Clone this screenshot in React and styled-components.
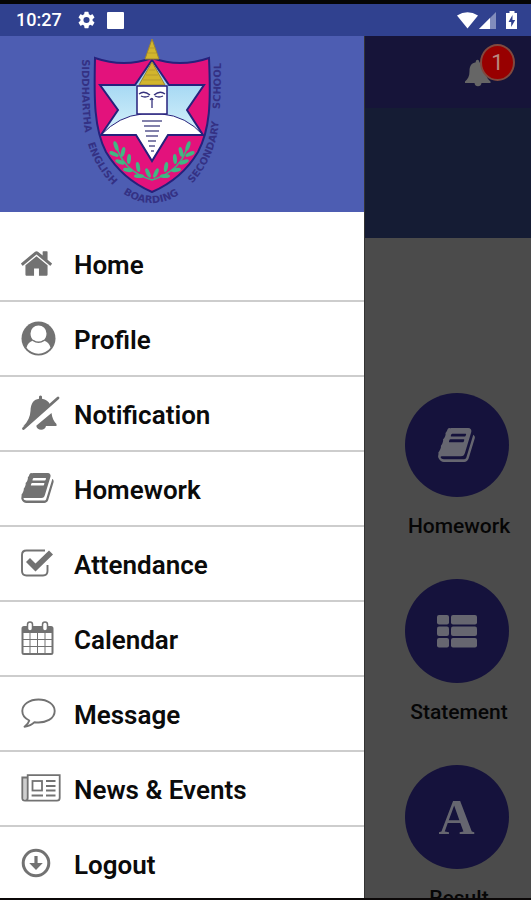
import React from "react";
import styled, { createGlobalStyle } from "styled-components";

const GlobalStyle = createGlobalStyle`
  *, *::before, *::after { box-sizing: border-box; }
  body { margin: 0; background: #000; }
  svg { display: block; flex: none; }
`;

const Screen = styled.div`
  display: flex;
  flex-direction: column;
  height: 100vh;
  overflow: hidden;
  border-top: 4px solid #050505;
  border-bottom: 2px solid #0b0808;
  font-family: Roboto, "Liberation Sans", sans-serif;
  color: #0b0b0b;
`;

const StatusBar = styled.header`
  display: flex;
  flex: none;
  align-items: center;
  justify-content: space-between;
  height: 32px;
  padding: 0 12px 0 16px;
  background: #30418f;
  color: #fff;
`;

const StatusGroup = styled.div`
  display: flex;
  align-items: center;
  gap: ${(p) => p.$gap}px;
`;

const Clock = styled.time`
  font-size: 18px;
  line-height: 24px;
  font-weight: 500;
`;

const Body = styled.div`
  display: flex;
  flex: 1;
  min-height: 0;
`;

const Drawer = styled.aside`
  display: flex;
  flex-direction: column;
  width: calc(100% - 167px);
  background: #fff;
  overflow: hidden;
`;

const DrawerHeader = styled.div`
  display: flex;
  flex: none;
  justify-content: center;
  height: 176px;
  padding-right: 60px;
  background: #4d5db2;
`;

const Menu = styled.nav`
  display: flex;
  flex-direction: column;
  padding-top: 15px;
`;

const MenuItem = styled.a`
  display: flex;
  flex: none;
  align-items: center;
  height: 75px;
  padding: 3px 0 0 21px;
  border-bottom: 2px solid #cdcdcd;
  color: inherit;
  text-decoration: none;
  font-size: 26px;
  line-height: 32px;
  font-weight: 600;
`;

const IconSlot = styled.span`
  flex: none;
  width: 53px;
  margin-bottom: 4px;
  color: #727272;
`;

const Dashboard = styled.main`
  display: flex;
  flex: 1;
  flex-direction: column;
  min-width: 0;
  overflow: hidden;
  background: #4b4b4b;
  border-left: 1px solid #333;
`;

const AppBar = styled.div`
  display: flex;
  flex: none;
  justify-content: flex-end;
  height: 72px;
  padding: 8px 16px 0 0;
  background: #161439;
`;

const BellButton = styled.button`
  position: relative;
  width: 50px;
  height: 44px;
  padding: 14px 0 0;
  border: 0;
  background: none;
  color: #666;
`;

const Badge = styled.span`
  position: absolute;
  top: 0;
  right: 0;
  width: 35px;
  height: 37px;
  border: 2px solid #80493f;
  border-radius: 50%;
  background: #980000;
  color: #b98a80;
  font: 22px/33px Roboto, sans-serif;
  text-align: center;
`;

const Banner = styled.div`
  flex: none;
  height: 130px;
  background: #151c34;
`;

const Tiles = styled.div`
  display: flex;
  flex-direction: column;
  align-items: flex-end;
  gap: 41px;
  padding: 155px 14px 0 0;
`;

const Tile = styled.a`
  display: flex;
  flex-direction: column;
  align-items: center;
  gap: 17px;
  width: 116px;
  color: #060606;
  text-decoration: none;
  font-size: 21px;
  line-height: 24px;
  font-weight: 500;
`;

const TileCircle = styled.span`
  display: flex;
  align-items: center;
  justify-content: center;
  width: 104px;
  height: 104px;
  margin-right: 5px;
  border-radius: 50%;
  background: #15123c;
  color: #666670;
`;

const Letter = styled.span`
  font: bold 50px/60px "Liberation Serif", serif;
`;

const bookPath =
  "M1703 478q40 57 18 129l-275 906q-19 64-76.5 107.5t-122.5 43.5h-923q-77 0-148.5-53.5t-99.5-131.5q-24-67-2-127 0-4 3-27t4-37q1-8-3-21.5t-3-19.5q2-11 8-21t16.5-23.5 16.5-23.5q23-38 45-91.5t30-91.5q3-10 .5-30t-.5-28q3-11 17-28t17-23q21-36 42-92t25-90q1-9-2.5-32t.5-28q4-13 22-30.5t22-22.5q19-26 42.5-84.5t27.5-96.5q1-8-3-25.5t-2-26.5q2-8 9-18t18-23 17-21q8-12 16.5-30.5t15-35 16-36 19.5-32 26.5-23.5 36-11.5 47.5 5.5l-1 3q38-9 51-9h761q74 0 114 56t18 130l-274 906q-36 119-71.5 153.5t-128.5 34.5h-869q-27 0-38 15-11 16-1 43 24 70 144 70h923q29 0 56-15.5t35-41.5l300-987q7-22 5-57 38 15 59 43zm-1064 2q-4 13 2 22.5t20 9.5h608q13 0 25.5-9.5t16.5-22.5l21-64q4-13-2-22.5t-20-9.5h-608q-13 0-25.5 9.5t-16.5 22.5zm-83 256q-4 13 2 22.5t20 9.5h608q13 0 25.5-9.5t16.5-22.5l21-64q4-13-2-22.5t-20-9.5h-608q-13 0-25.5 9.5t-16.5 22.5z";

const Glyph = ({ w, h, box, children }) => (
  <svg width={w} height={h} viewBox={box || `0 0 ${w} ${h}`} fill="currentColor" aria-hidden="true">
    {children}
  </svg>
);

const HomeIcon = () => (
  <Glyph w={31} h={25} box="89 253 1614 1283">
    <path d="M1472 992v480q0 26-19 45t-45 19h-384v-384h-256v384h-384q-26 0-45-19t-19-45v-480q0-1 .5-3t.5-3l575-474 575 474q1 2 1 6zm223-69l-62 74q-8 9-21 11h-3q-13 0-21-7l-692-577-692 577q-12 8-24 7-13-2-21-11l-62-74q-8-10-7-23.5t11-21.5l719-599q32-26 76-26t76 26l244 204v-195q0-14 9-23t23-9h192q14 0 23 9t9 23v408l219 182q10 8 11 21.5t-7 23.5z" />
  </Glyph>
);

const ProfileIcon = () => (
  <Glyph w={35} h={35}>
    <circle cx="17.5" cy="17.5" r="17" />
    <path fill="#fff" d="M17.5 4.5a8 8 0 0 0-8 8c0 3 1.200 5.300 3 7-3.800.8-6 3.300-7 7.200a15 15 0 0 0 24 0c-1-3.900-3.200-6.400-7-7.200 1.800-1.700 3-4 3-7a8 8 0 0 0-8-8z" />
    <path fill="none" stroke="currentColor" strokeWidth="1.500" d="M12 19.300q5.500 4 11 0" />
  </Glyph>
);

const BellOffIcon = () => (
  <Glyph w={39} h={36}>
    <path d="M2 31.500Q9 25 9.500 16C9.800 8 13 4.500 18 3.800V1.500q1.500-1.800 3 0v2.300c4 .6 6.500 2.600 8 5.700L8 29z" />
    <path d="M30.500 18c.6 5 2.500 8.500 5 11v2H25a5 5 0 0 1-9.700 0l.2-.5z" />
    <path fill="none" stroke="currentColor" strokeWidth="2.800" strokeLinecap="round" d="M2.500 33.500L37 3" />
  </Glyph>
);

const BookIcon = ({ w = 33, h = 30 }) => (
  <Glyph w={w} h={h} box="62 126 1670 1540">
    <path d={bookPath} />
  </Glyph>
);

const CheckIcon = () => (
  <Glyph w={32} h={28}>
    <path fill="none" stroke="currentColor" strokeWidth="1.900" d="M24 1.500H5.500Q1 1.500 1 6v16q0 4.500 4.500 4.500H22q4.500 0 4.500-4.500v-6" />
    <path d="M5 13l4-4 5.500 5.500L28 1.500l4 4L14.500 22.500z" />
  </Glyph>
);

const CalendarIcon = () => (
  <Glyph w={33} h={35}>
    <path fillRule="evenodd" d="M3 5h27q2.500 0 2.500 2.500v24q0 2.500-2.500 2.500H3Q.5 34 .5 31.500v-24Q.5 5 3 5zm-.5 7v6h6v-6zm7 0v6h6.500v-6zm7.500 0v6h6.500v-6zm7.500 0v6h6v-6zm-22 7v6h6v-6zm7 0v6h6.500v-6zm7.500 0v6h6.500v-6zm7.500 0v6h6v-6zm-22 7v6h6v-6zm7 0v6h6.500v-6zm7.500 0v6h6.500v-6zm7.500 0v6h6v-6z" />
    <rect x="6.500" y="1" width="5" height="9" rx="2.500" fill="#fff" stroke="currentColor" strokeWidth="1.500" />
    <rect x="21.500" y="1" width="5" height="9" rx="2.500" fill="#fff" stroke="currentColor" strokeWidth="1.500" />
  </Glyph>
);

const MessageIcon = () => (
  <Glyph w={35} h={30}>
    <path fill="none" stroke="currentColor" strokeWidth="1.900" strokeLinejoin="round" d="M17.500 1.500C8.500 1.500 1.300 6.500 1.300 13c0 4.200 2.800 7.500 7 9.500-.8 2.800-2.300 4.500-4.800 6.300 4.500-.6 7.500-2 10-4.600 12 1.500 20.200-4 20.200-11.200 0-6.500-7.200-11.500-16.200-11.500z" />
  </Glyph>
);

const NewsIcon = () => (
  <Glyph w={40} h={28}>
    <g fill="none" stroke="currentColor" strokeWidth="1.800">
      <path d="M6 3.500H1.300V24a2.700 2.700 0 0 0 5.400 0V1.200h32V24q0 2.700-2.700 2.700H4" />
      <rect x="11.500" y="7" width="9.500" height="9.500" />
      <path d="M25 7h9.500M25 12h9.500M25 16.500h9.500M10.600 21.500H22M25 21.500h9.500" />
    </g>
    <path opacity=".35" d="M2 4h4.500v20q-2 3-4.500 0z" />
  </Glyph>
);

const LogoutIcon = () => (
  <Glyph w={30} h={30}>
    <circle cx="15" cy="15" r="12.800" fill="none" stroke="currentColor" strokeWidth="3" />
    <path d="M13.400 8h3.200v7h5.200L15 22l-6.800-7h5.200z" />
  </Glyph>
);

const BellIcon = () => (
  <Glyph w={26} h={28}>
    <path d="M10.800 3.300V2q1.700-2.500 3.400 0v1.300c4.500.7 6.800 4 6.800 8.700 0 5.500 1.500 8 4.500 10.500V24h-9q-.5 3.200-3.500 3.200T9.500 24H0v-1.500C3 20 4.500 17 4.500 12c0-4.700 2-8 6.300-8.700z" />
  </Glyph>
);

const ListIcon = () => (
  <Glyph w={40} h={33}>
    {[0, 11.500, 23].map((y) => (
      <g key={y}>
        <rect y={y} width="12" height="9.500" rx="2" />
        <rect x="14" y={y} width="26" height="9.500" rx="2" />
      </g>
    ))}
  </Glyph>
);

const GearIcon = () => (
  <Glyph w={17} h={18} box="2 2 20 20">
    <path d="M19.140 12.940c.04-.3.060-.61.060-.94s-.02-.64-.07-.94l2.030-1.580a.49.49 0 0 0 .12-.61l-1.920-3.320a.49.49 0 0 0-.59-.22l-2.390.96a7 7 0 0 0-1.620-.94l-.36-2.540A.48.48 0 0 0 13.920 2.400h-3.840a.48.48 0 0 0-.48.410l-.36 2.540c-.59.240-1.130.57-1.620.94l-2.390-.96a.48.48 0 0 0-.59.220L2.740 8.870a.48.48 0 0 0 .12.610l2.030 1.580a6 6 0 0 0 0 1.880l-2.030 1.580a.49.49 0 0 0-.12.610l1.920 3.320c.12.220.37.290.59.220l2.390-.96c.5.380 1.030.7 1.620.94l.36 2.540c.05.240.24.410.48.410h3.840c.24 0 .44-.17.47-.41l.36-2.540a7 7 0 0 0 1.620-.94l2.390.96c.22.080.47 0 .59-.22l1.920-3.320a.48.48 0 0 0-.12-.61zM12 15.600a3.600 3.600 0 1 1 0-7.200 3.600 3.600 0 0 1 0 7.200z" />
  </Glyph>
);

const SchoolLogo = () => (
  <svg width="165" height="176" viewBox="0 2 165 176" role="img" aria-label="Siddhartha English Boarding Secondary School">
    <defs>
      <linearGradient id="sky" x1="0" y1="0" x2="0" y2="1">
        <stop offset="0" stopColor="#8ecdf0" />
        <stop offset="0.7" stopColor="#d3effa" />
      </linearGradient>
    </defs>
    <path
      d="M25 24Q54 34 82 24Q110 34 139 24C141 70 140 95 128 118Q112 145 82 158Q52 145 36 118C24 95 24 65 25 24z"
      fill="#e3127c" stroke="#26217c" strokeWidth="2"
    />
    <path d="M82 26L99 51H134L117 76L133 101H98L82 127L66 101H31L48 76L30 51H65z" fill="url(#sky)" />
    <path d="M31 101Q49 82 72 80H92Q116 82 133 101H98L82 127L66 101z" fill="#fff" stroke="#26217c" strokeWidth="1" />
    <path d="M82 26L99 51H134L117 76L133 101H98L82 127L66 101H31L48 76L30 51H65z" fill="none" stroke="#26217c" strokeWidth="2" />
    <path d="M82 5L89 25H75zM82 28L95 51H69z" fill="#d2b52d" stroke="#9c8430" strokeWidth="1" />
    <path d="M79 14h6M78 19h8M79 36h6M76 41h12M73 46h18" stroke="#b79b2c" />
    <rect x="67" y="52" width="30" height="28" fill="#fff" stroke="#26217c" strokeWidth="1.500" />
    <path d="M69 60q5-4 11 1M95 60q-5-4-11 1M71 62q4 2 8 0M93 62q-4 2-8 0M82 64v10M80 66q2-3 3 0" fill="none" stroke="#35317c" strokeWidth="1.300" />
    <path d="M72 87h20M74 92h16M75 97h14M76 102h12M78 107h8M79 112h6M81 117h3" stroke="#5a5890" strokeWidth="1.500" />
    <g fill="none" stroke="#41ae81" strokeWidth="1.500">
      <path d="M46 110q6 27 36 36q30-9 36-36" />
    </g>
    <g fill="#41b783">
      {[[46, 112, 70], [44, 120, 25], [53, 118, 105], [50, 128, 20], [59, 125, 95], [58, 136, 10], [68, 133, 80], [69, 142, 0], [78, 139, 65]].map(([x, y, a]) => (
        <React.Fragment key={`${x}-${y}`}>
          <ellipse cx={x} cy={y} rx="5" ry="2" transform={`rotate(${a} ${x} ${y})`} />
          <ellipse cx={164 - x} cy={y} rx="5" ry="2" transform={`rotate(${-a} ${164 - x} ${y})`} />
        </React.Fragment>
      ))}
    </g>
    <path id="motto" d="M12 25C12 60 12 80 15 98C20 130 48 169 82 169C116 169 143 130 148 95C151 70 151 45 151 12" fill="none" />
    <text fontFamily="DejaVu Sans, sans-serif" fontWeight="700" fontSize="10" fill="#343184">
      <textPath href="#motto">SIDDHARTHA</textPath>
      <textPath href="#motto" startOffset="85">ENGLISH</textPath>
      <textPath href="#motto" startOffset="147">BOARDING</textPath>
      <textPath href="#motto" startOffset="224">SECONDARY</textPath>
      <textPath href="#motto" startOffset="305">SCHOOL</textPath>
    </text>
  </svg>
);

const items = [
  ["Home", HomeIcon],
  ["Profile", ProfileIcon],
  ["Notification", BellOffIcon],
  ["Homework", BookIcon],
  ["Attendance", CheckIcon],
  ["Calendar", CalendarIcon],
  ["Message", MessageIcon],
  ["News & Events", NewsIcon],
  ["Logout", LogoutIcon],
];

export default function App() {
  return (
    <Screen>
      <GlobalStyle />
      <StatusBar>
        <StatusGroup $gap={16}>
          <Clock>10:27</Clock>
          <StatusGroup $gap={12}>
            <GearIcon />
            <Glyph w={17} h={17}>
              <rect width="17" height="17" rx="1" />
            </Glyph>
          </StatusGroup>
        </StatusGroup>
        <StatusGroup $gap={1}>
          <Glyph w={21} h={17}>
            <path d="M0 3.500Q10.500-3 21 3.500L10.500 16.500z" />
          </Glyph>
          <Glyph w={17} h={17}>
            <path d="M0 17L17 0v17z" opacity=".4" />
            <path d="M0 17L11 6v11z" />
          </Glyph>
          <Glyph w={22} h={18}>
            <path fillRule="evenodd" d="M10 2h2.500V0h5v2H20v16H9V2zm5.500 2L11.500 11h2.700v5l4-7h-2.700z" />
          </Glyph>
        </StatusGroup>
      </StatusBar>
      <Body>
        <Drawer>
          <DrawerHeader>
            <SchoolLogo />
          </DrawerHeader>
          <Menu>
            {items.map(([label, Icon]) => (
              <MenuItem key={label} href="#">
                <IconSlot>
                  <Icon />
                </IconSlot>
                {label}
              </MenuItem>
            ))}
          </Menu>
        </Drawer>
        <Dashboard>
          <AppBar>
            <BellButton aria-label="Notifications, 1 unread">
              <BellIcon />
              <Badge>1</Badge>
            </BellButton>
          </AppBar>
          <Banner />
          <Tiles>
            <Tile href="#">
              <TileCircle>
                <BookIcon w={37} h={34} />
              </TileCircle>
              Homework
            </Tile>
            <Tile href="#">
              <TileCircle>
                <ListIcon />
              </TileCircle>
              Statement
            </Tile>
            <Tile href="#">
              <TileCircle>
                <Letter>A</Letter>
              </TileCircle>
              Result
            </Tile>
          </Tiles>
        </Dashboard>
      </Body>
    </Screen>
  );
}
